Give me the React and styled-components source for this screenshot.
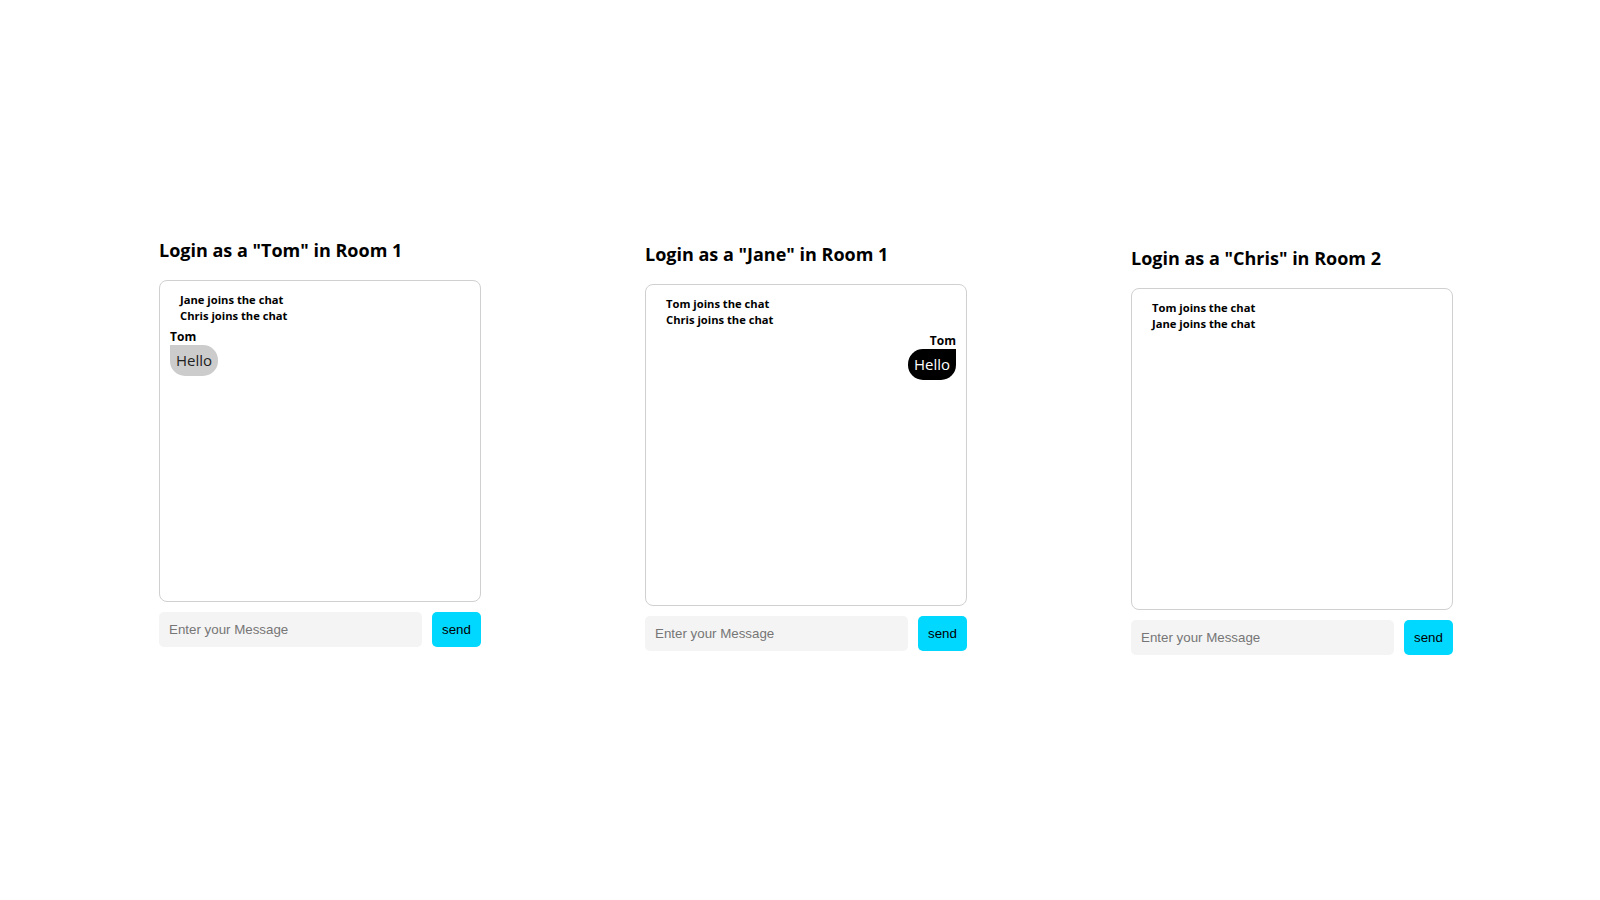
import React from "react";
import styled, { createGlobalStyle } from "styled-components";

const Global = createGlobalStyle`
  html, body { margin: 0; padding: 0; background: #fff; }
  body { font-family: "Open Sans", "Noto Sans", sans-serif; color: #000; }
`;

const Page = styled.div`
  width: 1600px;
  height: 900px;
  box-sizing: border-box;
  padding: 236px 0 0 159px;
  display: flex;
  align-items: flex-start;
  gap: 164px;
`;

const Panel = styled.section`
  width: 322px;
  margin-top: ${(p) => p.$offset}px;
  display: flex;
  flex-direction: column;
`;

const Heading = styled.h3`
  margin: 0 0 16px;
  font-size: 18px;
  line-height: 28px;
  font-weight: 700;
  white-space: nowrap;
`;

const ChatBox = styled.div`
  box-sizing: border-box;
  width: 322px;
  height: 322px;
  border: 1px solid #d0d0d0;
  border-radius: 8px;
  padding: 11px 10px 10px;
  display: flex;
  flex-direction: column;
`;

const Notices = styled.div`
  padding: 0 10px;
  font-size: 11.2px;
  line-height: 16px;
  font-weight: 700;
  margin-bottom: 5px;
`;

const Message = styled.div`
  display: flex;
  flex-direction: column;
  align-items: ${(p) => (p.$mine ? "flex-end" : "flex-start")};
`;

const Author = styled.div`
  font-size: 12px;
  line-height: 16px;
  font-weight: 700;
`;

const Bubble = styled.div`
  font-size: 15px;
  line-height: 21px;
  padding: 5px 6px;
  border-radius: ${(p) => (p.$mine ? "15px 0 15px 15px" : "0 15px 15px 15px")};
  background: ${(p) => (p.$mine ? "#000" : "#cccccc")};
  color: ${(p) => (p.$mine ? "#fff" : "#222")};
`;

const InputRow = styled.div`
  margin-top: 10px;
  display: flex;
  gap: 10px;
`;

const Input = styled.input`
  box-sizing: border-box;
  width: 263px;
  height: 35px;
  border: none;
  border-radius: 5px;
  background: #f4f4f4;
  padding: 0 10px;
  font-family: "Liberation Sans", Arial, sans-serif;
  font-size: 13.33px;
  outline: none;
  &::placeholder { color: #767676; }
`;

const SendButton = styled.button`
  box-sizing: border-box;
  width: 49px;
  height: 35px;
  border: none;
  border-radius: 5px;
  background: #00d8ff;
  color: #000;
  font-family: "Liberation Sans", Arial, sans-serif;
  font-size: 13.33px;
  padding: 0;
`;

const panels = [
  { name: "Tom", room: 1, notices: ["Jane joins the chat", "Chris joins the chat"], messages: [{ author: "Tom", text: "Hello", mine: false }], offset: 0 },
  { name: "Jane", room: 1, notices: ["Tom joins the chat", "Chris joins the chat"], messages: [{ author: "Tom", text: "Hello", mine: true }], offset: 4 },
  { name: "Chris", room: 2, notices: ["Tom joins the chat", "Jane joins the chat"], messages: [], offset: 8 },
];

export default function App() {
  return (
    <>
      <Global />
      <Page>
        {panels.map((p) => (
          <Panel key={p.name} $offset={p.offset}>
            <Heading>Login as a "{p.name}" in Room {p.room}</Heading>
            <ChatBox>
              <Notices>
                {p.notices.map((n) => (
                  <div key={n}>{n}</div>
                ))}
              </Notices>
              {p.messages.map((m, i) => (
                <Message key={i} $mine={m.mine}>
                  <Author>{m.author}</Author>
                  <Bubble $mine={m.mine}>{m.text}</Bubble>
                </Message>
              ))}
            </ChatBox>
            <InputRow>
              <Input placeholder="Enter your Message" />
              <SendButton>send</SendButton>
            </InputRow>
          </Panel>
        ))}
      </Page>
    </>
  );
}
